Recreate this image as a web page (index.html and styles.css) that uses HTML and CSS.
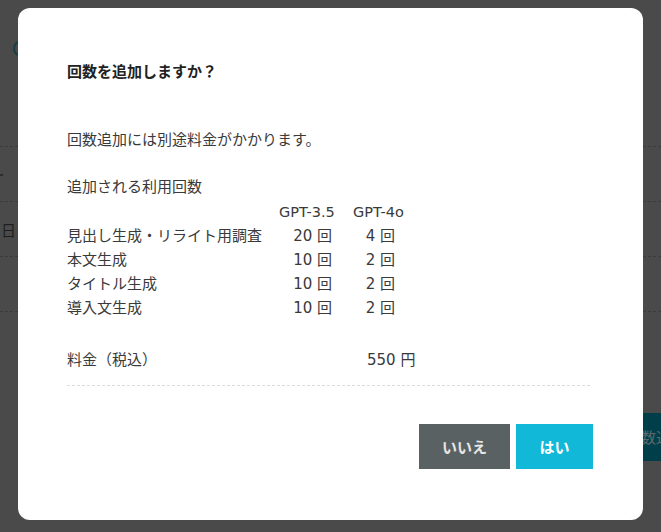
FILE: index.html
```html
<!DOCTYPE html>
<html lang="ja">
<head>
<meta charset="utf-8">
<title>回数を追加しますか？</title>
<link rel="stylesheet" href="styles.css">
</head>
<body>
<div class="page">
  <div class="page-head"><span class="ring"></span></div>
  <div class="page-list">
    <div class="page-row"></div>
    <div class="page-row"><span class="tick"></span></div>
    <div class="page-row"><span class="page-label">日</span></div>
    <div class="page-row"></div>
  </div>
  <div class="page-actions"><span class="page-btn">回数追加</span></div>
</div>

<div class="backdrop">
  <div class="modal">
    <h2 class="modal-title">回数を追加しますか？</h2>
    <p class="modal-note">回数追加には別途料金がかかります。</p>
    <p class="modal-sub">追加される利用回数</p>
    <div class="counts">
      <span class="c-name"></span><span class="c-h c2">GPT-3.5</span><span class="c-h c3">GPT-4o</span>
      <span class="c-name">見出し生成・リライト用調査</span><span class="c-v c2">20 回</span><span class="c-v c3">4 回</span>
      <span class="c-name">本文生成</span><span class="c-v c2">10 回</span><span class="c-v c3">2 回</span>
      <span class="c-name">タイトル生成</span><span class="c-v c2">10 回</span><span class="c-v c3">2 回</span>
      <span class="c-name">導入文生成</span><span class="c-v c2">10 回</span><span class="c-v c3">2 回</span>
    </div>
    <div class="price">
      <span class="price-label">料金（税込）</span>
      <span class="price-value">550 円</span>
    </div>
    <div class="divider"></div>
    <div class="buttons">
      <button class="btn btn-no">いいえ</button>
      <button class="btn btn-yes">はい</button>
    </div>
  </div>
</div>
</body>
</html>
```

FILE: styles.css
```css
* { box-sizing: border-box; }

html, body {
  margin: 0;
  padding: 0;
  width: 661px;
  height: 532px;
  overflow: hidden;
}

body {
  background: #4a4a4a;
  font-family: "DejaVu Sans", "Noto Sans CJK JP", sans-serif;
  color: #333;
}

/* dimmed page behind the dialog */
.page {
  width: 661px;
  height: 532px;
  overflow: hidden;
}

.page-head {
  height: 92px;
  padding: 40px 0 0 13px;
}

.ring {
  display: block;
  width: 17px;
  height: 17px;
  border: 2px solid #173f45;
  border-radius: 50%;
}

.page-row {
  height: 55px;
  border-bottom: 1px dashed #3c3c3c;
  display: flex;
  align-items: center;
}

.tick {
  display: block;
  width: 3px;
  height: 2px;
  margin-top: 2px;
  background: #2e2e2e;
}

.page-label {
  width: 16px;
  text-align: right;
  font-size: 15px;
  color: #1e1e1e;
  white-space: nowrap;
}

.page-actions {
  display: flex;
  padding: 101px 0 0 611px;
}

.page-btn {
  display: block;
  height: 48px;
  line-height: 48px;
  padding: 0 15px;
  background: #003f49;
  color: #5d6a6c;
  font-family: "Noto Sans CJK JP", sans-serif;
  font-size: 15px;
  white-space: nowrap;
}

/* dialog */
.backdrop {
  position: fixed;
  inset: 0;
  display: flex;
  justify-content: center;
  align-items: flex-start;
  padding-top: 8px;
}

.modal {
  width: 625px;
  background: #fff;
  border-radius: 12px;
  padding: 52px 50px 51px 49px;
  font-size: 15px;
  line-height: 24px;
  color: #3a3a3a;
}

.modal-title {
  margin: 0;
  font-size: 15px;
  line-height: 24px;
  font-weight: bold;
  color: #222;
}

.modal-note {
  margin: 44px 0 0;
}

.modal-sub {
  margin: 23px 0 0;
}

.counts {
  margin-top: 1px;
  display: grid;
  grid-template-columns: 212px 74px 45px;
  grid-auto-rows: 24px;
}

.c-name { white-space: nowrap; }

.c-h { text-align: left; white-space: nowrap; font-size: 14.5px; }

.c-v { text-align: right; white-space: nowrap; }
.c-v.c2 { padding-right: 21px; }
.c-v.c3 { padding-right: 3px; }

.price {
  margin-top: 28px;
  display: flex;
}

.price-label { width: 300px; }

.divider {
  margin-top: 13px;
  width: 523px;
  border-top: 1px dashed #dcdcdc;
}

.buttons {
  margin-top: 38px;
  display: flex;
  justify-content: flex-end;
  gap: 6px;
}

.btn {
  height: 45px;
  border: none;
  border-radius: 0;
  padding: 0 23px;
  font-family: "Noto Sans CJK JP", sans-serif;
  font-size: 15px;
  font-weight: bold;
  cursor: pointer;
}

.btn-no {
  width: 91px;
  background: #5a6162;
  color: #e6e6e6;
}

.btn-yes {
  width: 77px;
  background: #12b8d8;
  color: #fff;
}
```
